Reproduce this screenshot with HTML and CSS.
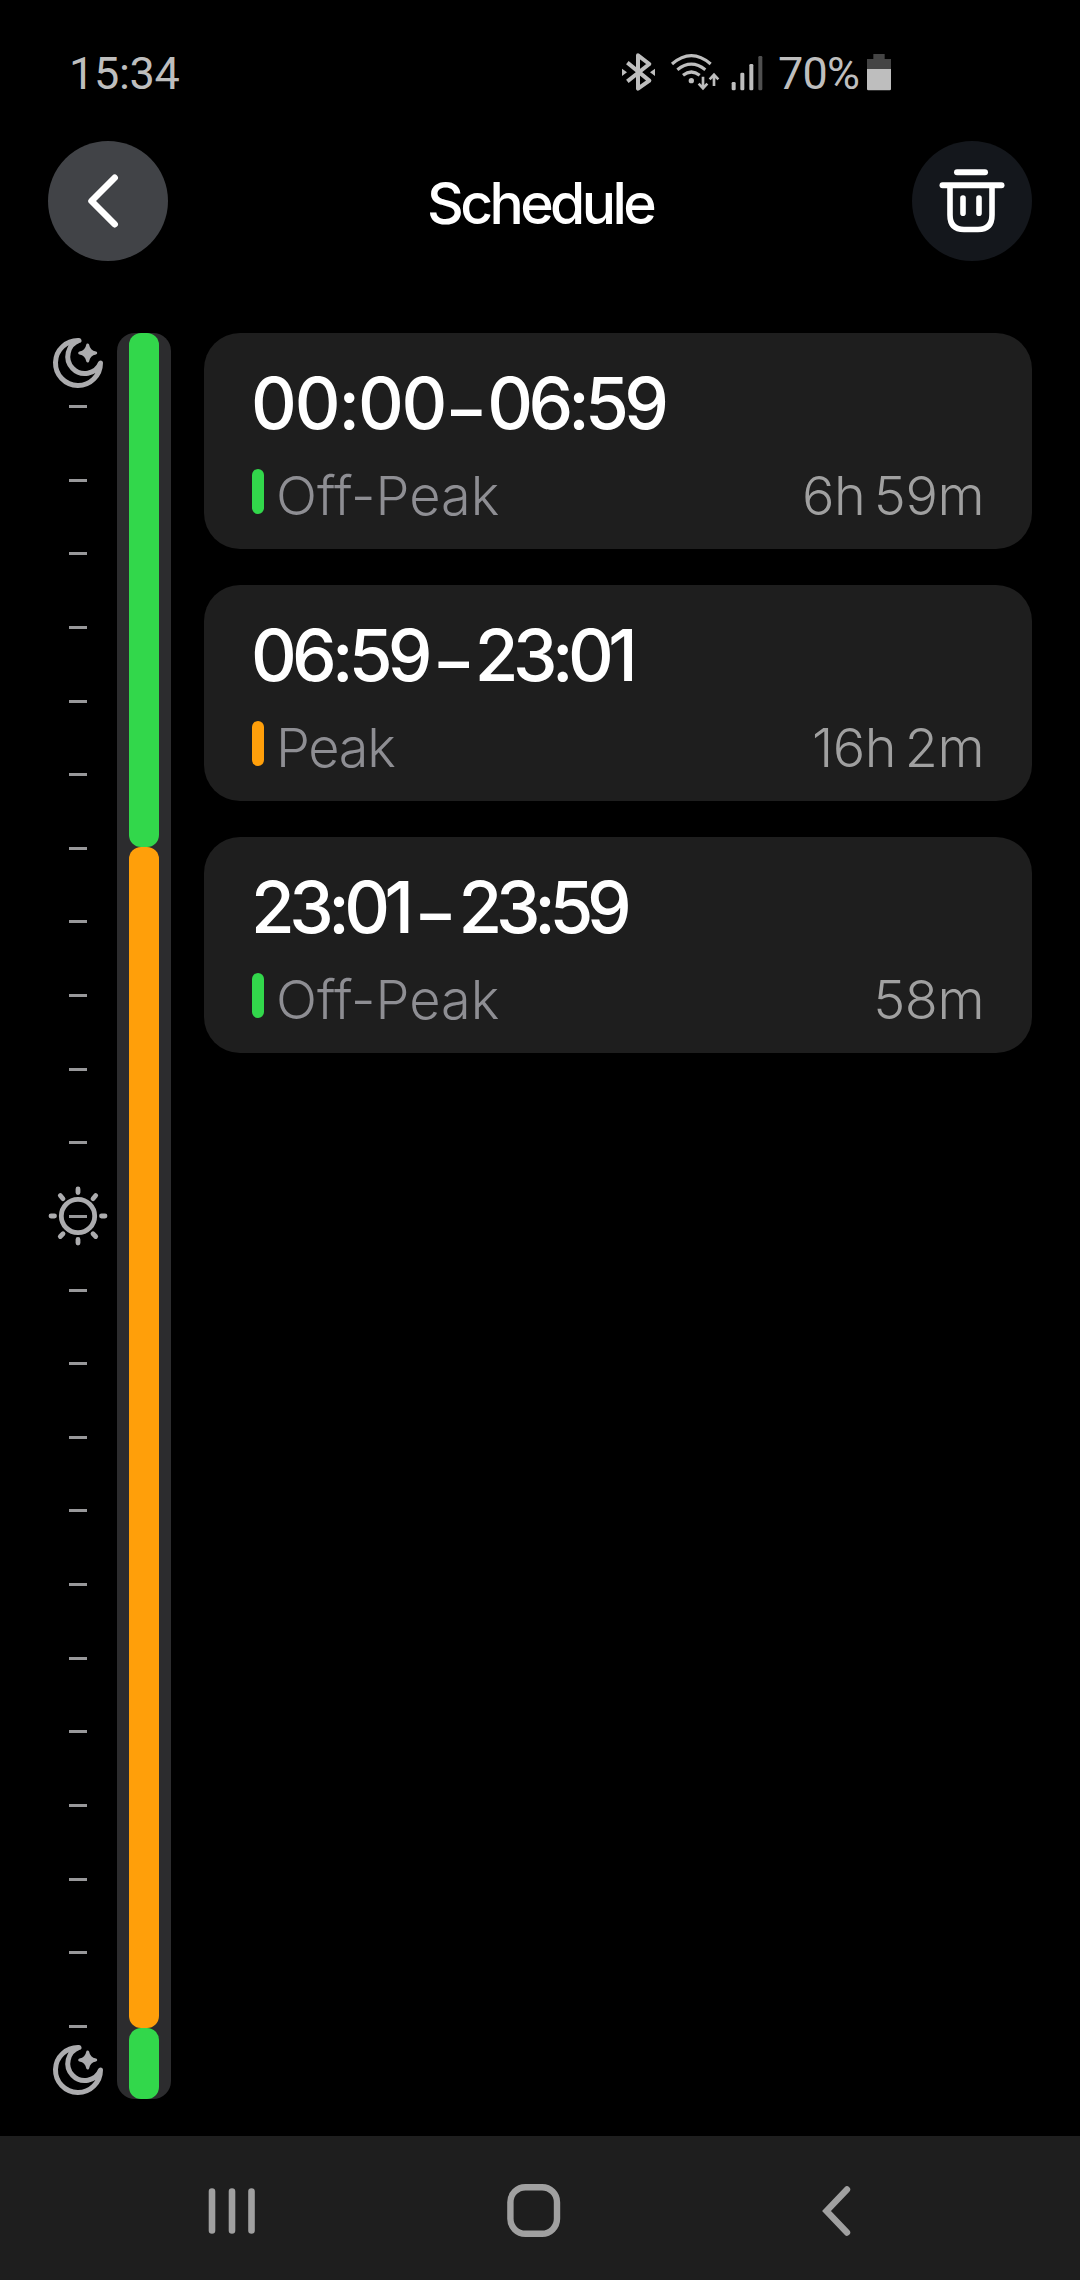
FILE: index.html
```html
<!DOCTYPE html>
<html lang="en">
<head>
    <meta charset="UTF-8">
    <meta name="viewport" content="width=device-width, initial-scale=1.0">
    <title>Schedule</title>
    <link rel="stylesheet" href="styles.css">
</head>
<body>
    <!-- Shared icons -->
    <svg class="sprite">
        <symbol id="moon" viewBox="0 0 60 60">
            <path d="M31 7.5A22.5 22.5 0 1 0 52.5 30A17 17 0 1 1 31 7.5Z" fill="none" stroke="currentColor" stroke-width="5" stroke-linejoin="round"/>
            <path d="M39.7 12Q40.8 18.9 47.7 20Q40.8 21.1 39.7 28Q38.6 21.1 31.7 20Q38.6 18.9 39.7 12Z" fill="currentColor" stroke="currentColor" stroke-width="3" stroke-linejoin="round"/>
        </symbol>
    </svg>

    <div class="status-bar">
        <span class="clock">15:34</span>
        <div class="status-icons">
            <svg class="bluetooth" width="36" height="42" viewBox="60 30 108 126">
                <path d="M82 68L148 122L114 146V46L148 72L82 124" fill="none" stroke="currentColor" stroke-width="12" stroke-linejoin="round"/>
                <path d="M66 86L81 97L66 108ZM165 86L150 97L165 108Z" fill="currentColor"/>
            </svg>
            <svg class="wifi" width="50" height="42" viewBox="210 30 150 126">
                <g fill="none" stroke="currentColor" stroke-width="9.5">
                    <path d="M216 72Q274 22 332 72"/>
                    <path d="M232 89Q274 56 316 89"/>
                    <path d="M249 106Q274 86 299 106"/>
                    <path d="M309 110V143M296 131L309 145L322 131M342 138V106M329 118L342 104L355 118" stroke-width="8"/>
                </g>
                <circle cx="274" cy="122" r="8" fill="currentColor"/>
            </svg>
            <svg class="signal" width="34" height="42" viewBox="390 30 102 126">
                <g fill="currentColor">
                    <rect x="395" y="126" width="12" height="25" rx="4"/>
                    <rect x="421" y="98" width="12" height="53" rx="4"/>
                    <rect x="448" y="72" width="12" height="79" rx="4"/>
                </g>
                <rect x="475" y="48" width="12" height="103" rx="4" fill="#505050"/>
            </svg>
            <span class="percent">70%</span>
            <svg class="battery" width="26" height="42" viewBox="798 30 78 126">
                <path d="M820 42H854V57H873V87H801V57H820Z" fill="#444"/>
                <path d="M801 87H873V147Q873 151 869 151H805Q801 151 801 147Z" fill="currentColor"/>
            </svg>
        </div>
    </div>

    <header class="header">
        <button class="round-button back-button" aria-label="Back">
            <svg width="120" height="120" viewBox="0 0 120 120">
                <path d="M66.7 36.8L43.5 60L66.7 83.2" fill="none" stroke="#fff" stroke-width="6.5" stroke-linecap="round" stroke-linejoin="round"/>
            </svg>
        </button>
        <h1>Schedule</h1>
        <button class="round-button delete-button" aria-label="Delete">
            <svg width="120" height="120" viewBox="0 0 120 120">
                <g fill="none" stroke="#fff" stroke-width="6" stroke-linecap="round">
                    <path d="M45 31.3H73"/>
                    <path d="M30.5 44.2H89.5"/>
                    <path d="M38 45V74Q38 88.5 52 88.5H66Q80 88.5 80 74V45" stroke-width="5.6"/>
                    <path d="M51 57V72.2M67 57V72.2" stroke-width="5.6"/>
                </g>
            </svg>
        </button>
    </header>

    <main class="content">
        <div class="scale">
            <svg class="moon"><use href="#moon"/></svg>
            <div class="ticks">
                <i></i><i></i><i></i><i></i><i></i><i></i><i></i><i></i><i></i><i></i><i></i>
                <i class="noon">
                    <svg class="sun" width="60" height="60" viewBox="-30 -30 60 60">
                        <g fill="none" stroke="currentColor" stroke-width="4.8" stroke-linecap="round">
                            <circle r="16.7"/>
                            <path d="M0 -27V-23.5M0 23.5V27M-27 0H-23.5M23.5 0H27"/>
                            <path d="M-17.7 -20.5L-15 -17.3M17.7 -20.5L15 -17.3M-17.7 20.5L-15 17.8M17.7 20.5L15 17.8"/>
                        </g>
                    </svg>
                </i>
                <i></i><i></i><i></i><i></i><i></i><i></i><i></i><i></i><i></i><i></i><i></i>
            </div>
            <svg class="moon"><use href="#moon"/></svg>
        </div>

        <!-- flex-grow is the length of the period in minutes -->
        <div class="rail">
            <div class="segment off-peak" style="flex-grow: 419"></div>
            <div class="segment peak" style="flex-grow: 962"></div>
            <div class="segment off-peak" style="flex-grow: 58"></div>
        </div>

        <div class="cards">
            <div class="card">
                <div class="time"><span class="wide">00:00</span><span class="dash">–</span><span>06:59</span></div>
                <div class="details">
                    <span class="marker off-peak"></span>
                    <span class="label">Off-Peak</span>
                    <span class="duration">6h 59m</span>
                </div>
            </div>
            <div class="card">
                <div class="time"><span>06:59</span><span class="dash">–</span><span class="narrow">23:01</span></div>
                <div class="details">
                    <span class="marker peak"></span>
                    <span class="label short">Peak</span>
                    <span class="duration">16h 2m</span>
                </div>
            </div>
            <div class="card">
                <div class="time"><span class="narrow">23:01</span><span class="dash">–</span><span class="narrower">23:59</span></div>
                <div class="details">
                    <span class="marker off-peak"></span>
                    <span class="label">Off-Peak</span>
                    <span class="duration">58m</span>
                </div>
            </div>
        </div>
    </main>

    <nav class="nav-bar">
        <svg width="60" height="60" viewBox="0 0 60 60">
            <path d="M10 11.5V50.5M30 11.5V50.5M49.5 11.5V50.5" fill="none" stroke="currentColor" stroke-width="6.6" stroke-linecap="round"/>
        </svg>
        <svg width="60" height="60" viewBox="0 0 60 60">
            <rect x="6.4" y="7.2" width="46.6" height="46.6" rx="15" fill="none" stroke="currentColor" stroke-width="6.4"/>
        </svg>
        <svg width="60" height="60" viewBox="0 0 60 60">
            <path d="M41 9.5L20.5 31L41 52.5" fill="none" stroke="currentColor" stroke-width="6.4" stroke-linecap="round"/>
        </svg>
    </nav>
</body>
</html>
```
FILE: styles.css
```css
* {
    margin: 0;
    padding: 0;
    box-sizing: border-box;
}

body {
    width: 1080px;
    height: 2280px;
    background: #000;
    color: #fff;
    font-family: Inter, sans-serif;
    display: flex;
    flex-direction: column;
    overflow: hidden;
}

svg {
    display: block;
    flex: none;
}

.sprite {
    width: 0;
    height: 0;
    position: absolute;
}

/* Status bar */
.status-bar {
    height: 141px;
    padding: 50px 188px 0 69px;
    display: flex;
    justify-content: space-between;
    align-items: flex-start;
    font-family: Roboto, sans-serif;
    font-size: 45px;
    line-height: 48px;
    color: #bebebe;
}

.clock {
    letter-spacing: -0.3px;
}

.status-icons {
    display: flex;
}

.wifi {
    margin-left: 14px;
}

.signal {
    margin: 0 14px 0 10px;
}

.percent {
    width: 88px;
    letter-spacing: -0.8px;
}

/* Header */
.header {
    height: 192px;
    padding: 0 48px;
    display: flex;
    justify-content: space-between;
    align-items: flex-start;
}

.header h1 {
    font-size: 57px;
    font-weight: 500;
    line-height: 126px;
    letter-spacing: -3.6px;
}

.round-button {
    width: 120px;
    height: 120px;
    border: none;
    border-radius: 50%;
}

.back-button {
    background: #414347;
}

.delete-button {
    background: #14171c;
}

/* Day scale */
.content {
    flex: 1;
    padding: 0 48px;
    display: flex;
    align-items: flex-start;
}

.scale {
    width: 60px;
    height: 1767px;
    display: flex;
    flex-direction: column;
    align-items: center;
    gap: 12px;
    color: #acacae;
}

.moon {
    width: 60px;
    height: 60px;
}

.ticks {
    flex: 1;
    display: flex;
    flex-direction: column;
    justify-content: space-between;
}

.ticks i {
    width: 18px;
    height: 3px;
    background: #98989a;
}

.ticks .noon {
    position: relative;
}

.sun {
    position: absolute;
    left: -21px;
    top: -29px;
}

.rail {
    width: 54px;
    height: 1766px;
    margin: 0 33px 0 9px;
    padding: 0 12px;
    border-radius: 18px;
    background: #2c2c2e;
    display: flex;
    flex-direction: column;
}

.segment {
    border-radius: 12px;
}

.off-peak {
    background: #32d74b;
}

.peak {
    background: #ff9f0a;
}

/* Period cards */
.cards {
    flex: 1;
    display: flex;
    flex-direction: column;
    gap: 36px;
}

.card {
    height: 216px;
    padding: 28px 48px 0;
    border-radius: 36px;
    background: #1e1e1e;
}

.time {
    height: 84px;
    margin-left: -1px;
    display: flex;
    font-size: 71px;
    font-weight: 500;
    line-height: 84px;
    letter-spacing: -4.8px;
}

.time .wide {
    letter-spacing: -2.1px;
}

.time .narrow {
    letter-spacing: -5.5px;
}

.time .narrower {
    letter-spacing: -6.3px;
}

/* The dash sits a little below the middle of the digits */
.time .dash {
    width: 42px;
    margin: 0 0 0 5px;
    font-size: 61px;
    font-weight: 600;
    line-height: 96px;
    letter-spacing: 0;
    text-align: center;
}

.time .wide + .dash {
    width: 42px;
    margin-left: 0;
}

.time .narrow + .dash {
    margin: 0 2px 0 6px;
}

.details {
    display: flex;
    align-items: flex-start;
    padding-top: 24px;
}

.marker {
    width: 12px;
    height: 45px;
    margin-right: 12px;
    border-radius: 6px;
}

.label,
.duration {
    font-size: 54px;
    font-weight: 300;
    line-height: 54px;
}

.label {
    color: #8e8e93;
}

.label.short {
    letter-spacing: -1.3px;
}

.duration {
    margin-left: auto;
    color: #a0a0a0;
    letter-spacing: -0.5px;
    word-spacing: -6px;
}

/* Android navigation */
.nav-bar {
    height: 144px;
    padding: 44px 0 0 202px;
    display: flex;
    gap: 242px;
    background: #1e1e1e;
    color: #a0a0a0;
}
```
